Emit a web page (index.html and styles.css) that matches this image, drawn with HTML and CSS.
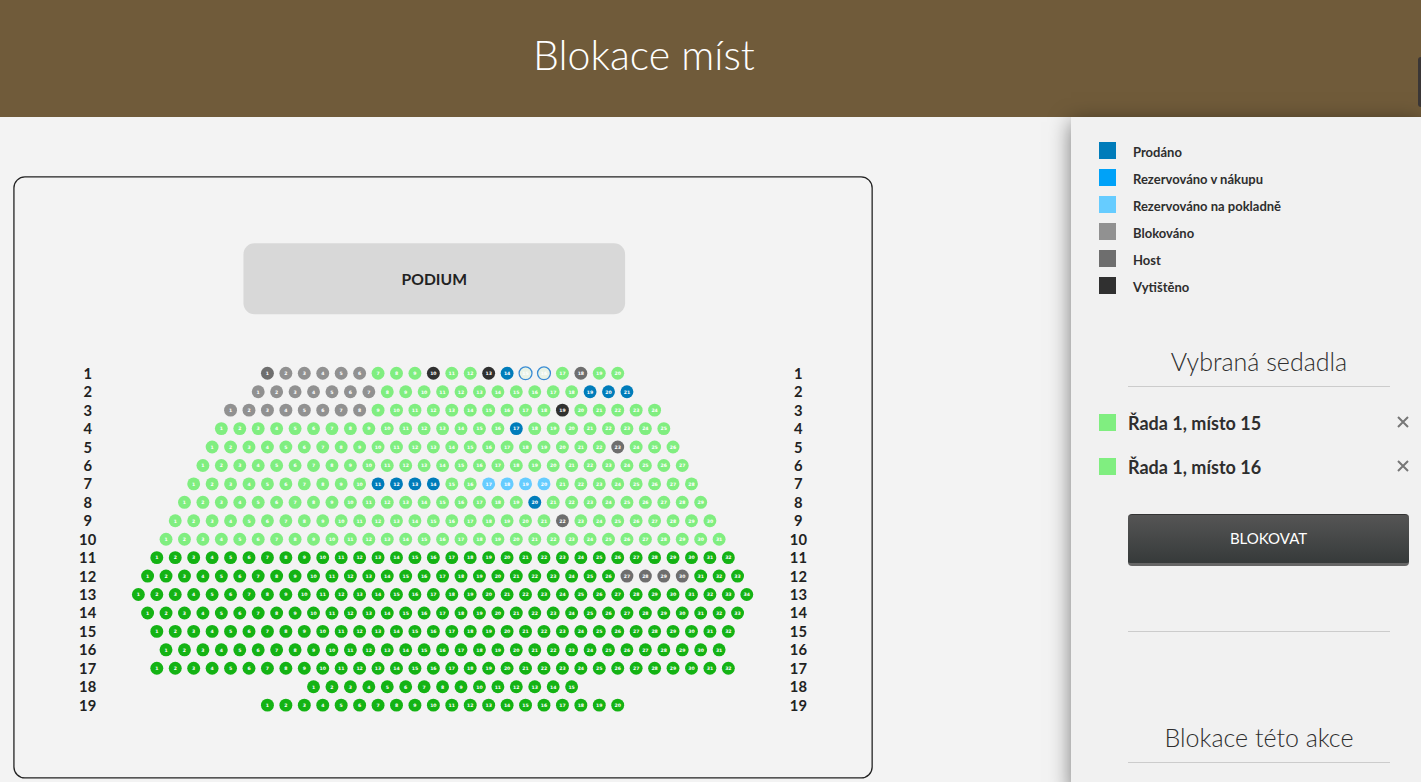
FILE: index.html
```html
<!DOCTYPE html>
<html lang="cs">
<head>
  <meta charset="UTF-8">
  <title>Blokace míst</title>
  <link rel="stylesheet" href="styles.css">
</head>
<body>
  <header class="header">
    <h1>Blokace míst</h1>
  </header>
  <div class="side-tab"></div>

  <div class="content">
    <main class="hall">
      <svg class="map" viewBox="0 0 934 654">
        <rect class="frame" x="1" y="1" width="931" height="652" rx="12"/>
        <rect class="podium" x="250" y="73" width="414" height="77" rx="12"/>
        <text class="podium-label" x="457" y="118">PODIUM</text>
        <g id="seats"></g>
      </svg>
    </main>

    <aside class="sidebar">
      <ul class="legend">
        <li><span class="box sold"></span>Prodáno</li>
        <li><span class="box in-cart"></span>Rezervováno v nákupu</li>
        <li><span class="box reserved"></span>Rezervováno na pokladně</li>
        <li><span class="box blocked"></span>Blokováno</li>
        <li><span class="box guest"></span>Host</li>
        <li><span class="box printed"></span>Vytištěno</li>
      </ul>

      <h2>Vybraná sedadla</h2>
      <ul class="selected">
        <li>
          <span class="box free"></span>Řada 1, místo 15
          <button class="remove" type="button" aria-label="Odebrat místo 15">
            <svg viewBox="0 0 12 12"><path d="M1 1L11 11M11 1L1 11"/></svg>
          </button>
        </li>
        <li>
          <span class="box free"></span>Řada 1, místo 16
          <button class="remove" type="button" aria-label="Odebrat místo 16">
            <svg viewBox="0 0 12 12"><path d="M1 1L11 11M11 1L1 11"/></svg>
          </button>
        </li>
      </ul>
      <button class="submit" type="button">BLOKOVAT</button>

      <hr>
      <h2>Blokace této akce</h2>
    </aside>
  </div>

  <script src="seats.js"></script>
</body>
</html>
```
FILE: styles.css
```css
* { box-sizing: border-box; }
body { margin: 0; min-height: 100vh; display: flex; flex-direction: column; overflow-x: hidden; font-family: Lato, sans-serif; background: #f3f3f3; color: #2e2e2e; }
ul { list-style: none; margin: 0; padding: 0; }

.header { background: #705b3a; padding: 31px 133px 38px 0; }
h1 { margin: 0; font-size: 41px; line-height: 48px; font-weight: 300; text-align: center; color: #fff; }
.side-tab { position: fixed; top: 57px; right: 0; z-index: 2; width: 3px; height: 50px; background: #3a3636; border-radius: 4px 0 0 4px; }

.content { flex: 1; display: flex; }
.hall { flex: 1; padding: 59px 13px 0; }
.map { display: block; width: 100%; max-width: 861px; }
.frame { fill: none; stroke: #222; stroke-width: 1.4; }
.podium { fill: #d8d8d8; }
.podium-label { font-size: 17px; font-weight: 700; text-anchor: middle; fill: #222; }
.row-label { font-size: 16px; font-weight: 700; text-anchor: middle; fill: #222; }
.number { font-family: "DejaVu Sans", sans-serif; font-size: 5px; font-weight: 700; text-anchor: middle; fill: #fff; }

/* seat states */
.sold { background: #007cba; fill: #007cba; }
.in-cart { background: #00a2f8; fill: #00a2f8; }
.reserved { background: #66ccff; fill: #66ccff; }
.blocked { background: #919191; fill: #919191; }
.guest { background: #6e6e6e; fill: #6e6e6e; }
.printed { background: #303030; fill: #303030; }
.free { background: #80ee80; fill: #80ee80; }
.second { fill: #14b314; }
.picked { fill: #e9f3e6; stroke: #3a8cd4; stroke-width: 1.4; }

.sidebar { width: 350px; padding: 22px 12px 0 28px; background: #f1f1f1; box-shadow: 0 5px 20px rgba(0, 0, 0, 0.5); }
.box { width: 17px; height: 17px; flex: none; }
.legend li { display: flex; gap: 17px; height: 27px; padding-top: 3px; font-size: 13px; line-height: 20px; font-weight: 700; }

h2 { margin: 32px 19px 27px 29px; height: 54px; padding-top: 14px; border-bottom: 1px solid #ccc; font-size: 25px; line-height: 28px; font-weight: 300; text-align: center; }
.selected li { display: flex; align-items: flex-start; gap: 12px; height: 44px; font-size: 18px; line-height: 18px; font-weight: 700; }
.remove { margin-left: auto; padding: 2px 0; width: 12px; background: none; border: 0; cursor: pointer; }
.remove svg { display: block; width: 12px; height: 12px; fill: none; stroke: #777; stroke-width: 2; }
.submit { display: block; width: 281px; height: 52px; margin: 12px 0 0 29px; padding: 0 0 2px; border: 0; border-top: 1px solid #333; border-bottom: 3px solid #666; border-radius: 4px; background: linear-gradient(#555, #363a3a); color: #fff; font: 400 15px Lato, sans-serif; cursor: pointer; }
hr { margin: 65px 19px 0 29px; border: 0; border-top: 1px solid #ccc; }
hr + h2 { margin-top: 77px; }
```
FILE: seats.js
```js
const counts = [20, 21, 24, 25, 26, 27, 28, 29, 30, 31, 32, 33, 34, 33, 32, 31, 32, 15, 20];

// row: [from, to, state]
const states = {
  1: [[1, 1, 'guest'], [2, 6, 'blocked'], [10, 10, 'printed'], [13, 13, 'printed'], [14, 14, 'sold'], [15, 16, 'picked'], [18, 18, 'guest']],
  2: [[1, 7, 'blocked'], [19, 21, 'sold']],
  3: [[1, 8, 'blocked'], [19, 19, 'printed']],
  4: [[17, 17, 'sold']],
  5: [[23, 23, 'guest']],
  7: [[11, 14, 'sold'], [17, 20, 'reserved']],
  8: [[20, 20, 'sold']],
  9: [[22, 22, 'guest']],
  12: [[27, 30, 'guest']]
};

function seatState(row, seat) {
  const found = (states[row] || []).find(s => seat >= s[0] && seat <= s[1]);
  if (found) return found[2];
  return row > 10 ? 'second' : 'free';
}

let out = '';
counts.forEach((count, i) => {
  const row = i + 1;
  const y = 214 + i * 20;
  out += `<text class="row-label" x="81" y="${y + 6}">${row}</text>`;
  for (let seat = 1; seat <= count; seat++) {
    const x = 466 + (seat - 1) * 20 - (count - 1) * 10;
    out += `<circle class="${seatState(row, seat)}" cx="${x}" cy="${y}" r="7"/>`;
    out += `<text class="number" x="${x}" y="${y + 2}">${seat}</text>`;
  }
  out += `<text class="row-label" x="852" y="${y + 6}">${row}</text>`;
});
document.getElementById('seats').innerHTML = out;
```
